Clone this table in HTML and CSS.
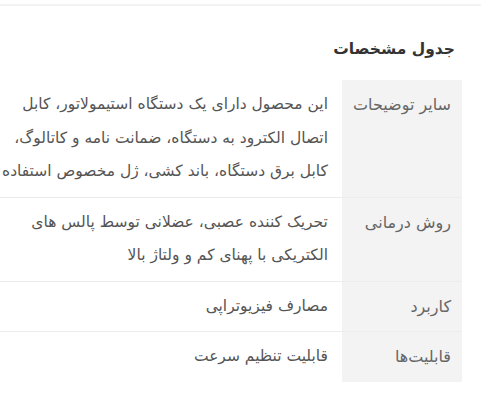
FILE: index.html
```html
<!DOCTYPE html>
<html lang="fa" dir="rtl">
<head>
<meta charset="utf-8">
<link rel="stylesheet" href="styles.css">
</head>
<body>
<div class="topline"></div>
<section class="specs">
  <h2 class="specs-title">جدول مشخصات</h2>
  <table class="specs-table">
    <tr>
      <th>سایر توضیحات</th>
      <td>این محصول دارای یک دستگاه استیمولاتور، کابل اتصال الکترود به دستگاه، ضمانت نامه و کاتالوگ، کابل برق دستگاه، باند کشی، ژل مخصوص استفاده</td>
    </tr>
    <tr>
      <th>روش درمانی</th>
      <td>تحریک کننده عصبی، عضلانی توسط پالس های الکتریکی با پهنای کم و ولتاژ بالا</td>
    </tr>
    <tr>
      <th>کاربرد</th>
      <td>مصارف فیزیوتراپی</td>
    </tr>
    <tr>
      <th>قابلیت‌ها</th>
      <td>قابلیت تنظیم سرعت</td>
    </tr>
  </table>
</section>
</body>
</html>
```
FILE: styles.css
```css
html, body {
  margin: 0;
  padding: 0;
  background: #fff;
}
body {
  font-family: "DejaVu Sans", sans-serif;
  direction: rtl;
}
.topline {
  margin-top: 4px;
  height: 2px;
  background: #f3f3f3;
}
.specs {
  padding: 0 19px 0 0;
}
.specs-title {
  margin: 0;
  padding-top: 30px;
  height: 44px;
  font-size: 15.5px;
  font-weight: bold;
  color: #333;
  line-height: 26px;
  padding-right: 7px;
}
.specs-table {
  width: 100%;
  border-collapse: collapse;
  font-size: 15.5px;
  line-height: 33.5px;
}
.specs-table th {
  width: 96px;
  background: #f3f3f3;
  color: #666;
  font-size: 16px;
  font-weight: normal;
  text-align: right;
  vertical-align: top;
  padding: 8px 11px 8px 11px;
  white-space: nowrap;
}
.specs-table td {
  color: #555;
  text-align: right;
  vertical-align: top;
  padding: 8px 14px 8px 0;
}
.specs-table tr + tr th,
.specs-table tr + tr td {
  border-top: 1px solid #ececec;
}
```
